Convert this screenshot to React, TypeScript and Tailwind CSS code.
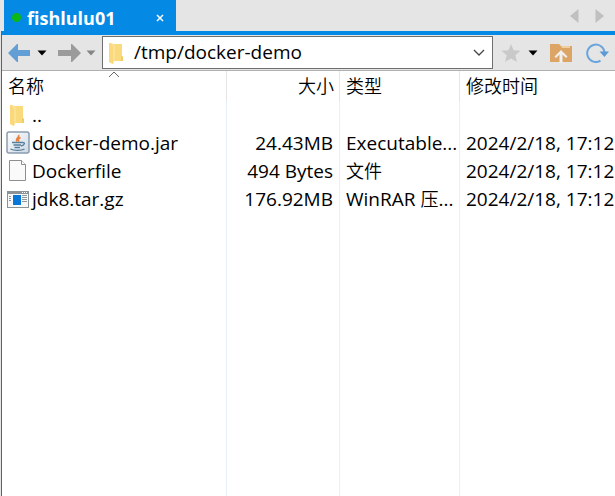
import React, { useState } from "react";

type FileRow = {
  icon: React.ReactNode;
  name: string;
  size: string;
  type: React.ReactNode;
  modified: string;
};

const FolderIcon = () => (
  <svg width="24" height="24" viewBox="0 0 24 24" className="shrink-0">
    <path d="M8 3h9v12l1 1v4H8z" fill="#f9da7c" />
    <path d="M16 15h1l1 1v4h-2z" fill="#f3cd63" />
    <path d="M4 2h3l3 3v14l-2 4-4-2z" fill="#fde294" />
    <path d="M4 2h1l3 4v17l-4-2z" fill="#fbd87c" />
  </svg>
);

const JarIcon = () => (
  <svg width="24" height="24" viewBox="0 0 24 24" className="shrink-0">
    <defs>
      <linearGradient id="jar" x1="0" y1="0" x2="1" y2="1">
        <stop offset="0" stopColor="#ffffff" />
        <stop offset="1" stopColor="#cdd8e3" />
      </linearGradient>
    </defs>
    <rect x="1" y="1" width="22" height="21" rx="2" fill="url(#jar)" stroke="#8b9cae" strokeWidth="1.5" />
    <path d="M12.5 4c1.500 2.500-3.500 3.500-1.500 6.500M14.500 6.500c-3 1.500-2.500 2-1.500 4" fill="none" stroke="#e9803c" strokeWidth="1.7" />
    <path d="M6 11.500h10M7.500 14h7.500M8.500 16.500h5.500M16 11.500c4-.5 2.500 3-1 3.500" fill="none" stroke="#557f9f" strokeWidth="1.4" />
    <path d="M4.500 18c3 1.800 11 1.800 14 0" fill="none" stroke="#557f9f" strokeWidth="1.4" />
  </svg>
);

const DocumentIcon = () => (
  <svg width="24" height="24" viewBox="0 0 24 24" className="shrink-0">
    <path d="M3.500 1.500h12l4 4v16h-16z" fill="#fafafa" stroke="#8e8e8e" />
    <path d="M15.500 1.500v4h4" fill="#fff" stroke="#8e8e8e" />
  </svg>
);

const ArchiveIcon = () => (
  <svg width="24" height="24" viewBox="0 0 24 24" className="shrink-0" shapeRendering="crispEdges">
    <rect x="1" y="4" width="22" height="17" fill="#8b9298" />
    <rect x="2" y="7" width="20" height="13" fill="#f8f8f8" />
    <path d="M16 5.500h1M18 5.500h1M20 5.500h1" stroke="#fff" />
    <rect x="7" y="8" width="8" height="10" fill="#0877d9" />
    <path d="M3 9.500h2M3 11.500h2M3 13.500h2M16 8.500h5M16 10.500h5M16 12.500h5M16 14.500h5" stroke="#8f969c" />
  </svg>
);

const Caret = ({ color }: { color: string }) => (
  <svg width="10" height="6" viewBox="0 0 10 6" className="shrink-0">
    <path d="M0.500 0.500h9L5 5.500z" fill={color} />
  </svg>
);

const rows: FileRow[] = [
  { icon: <FolderIcon />, name: "..", size: "", type: "", modified: "" },
  { icon: <JarIcon />, name: "docker-demo.jar", size: "24.43MB", type: "Executable...", modified: "2024/2/18, 17:12" },
  {
    icon: <DocumentIcon />,
    name: "Dockerfile",
    size: "494 Bytes",
    type: <span className="text-[18px] font-[350]">文件</span>,
    modified: "2024/2/18, 17:12",
  },
  {
    icon: <ArchiveIcon />,
    name: "jdk8.tar.gz",
    size: "176.92MB",
    type: (
      <>
        WinRAR <span className="text-[18px] font-[350]">压</span>...
      </>
    ),
    modified: "2024/2/18, 17:12",
  },
];

const TabBar = () => (
  <div className="flex h-[31px] items-stretch justify-between pl-1">
    <div className="flex w-[172px] items-center bg-[#048ae5] pt-1 pr-2 pl-2 text-white">
      <span className="size-[9px] rounded-full bg-[#0cb814]" />
      <button className="ml-[6px] text-[18px] leading-6 font-bold">fishlulu01</button>
      <button aria-label="关闭" className="ml-auto flex size-4 items-center justify-center">
        <svg width="8" height="8" viewBox="0 0 8 8">
          <path d="M1 1l6 6M7 1L1 7" stroke="#fff" strokeWidth="1.5" />
        </svg>
      </button>
    </div>
    <div className="flex items-center gap-4 pr-[11px]">
      <button aria-label="上一个标签">
        <svg width="9" height="14" viewBox="0 0 9 14">
          <path d="M8.500 0v14L0 7z" fill="#c0c0c0" />
        </svg>
      </button>
      <button aria-label="下一个标签">
        <svg width="9" height="14" viewBox="0 0 9 14">
          <path d="M0.500 0v14L9 7z" fill="#c0c0c0" />
        </svg>
      </button>
    </div>
  </div>
);

const Toolbar = () => {
  const [path, setPath] = useState("/tmp/docker-demo");

  return (
    <div className="flex h-9 items-center border-b border-[#b0b0b0] bg-[#e5e5e5] px-[6px]">
      <button aria-label="后退">
        <svg width="22" height="18" viewBox="0 0 22 18">
          <path d="M0 9l9-9h1v6h12v6H10v6H9z" fill="#639fd4" />
        </svg>
      </button>
      <button aria-label="后退历史" className="ml-[7px]">
        <Caret color="#000" />
      </button>
      <button aria-label="前进" className="ml-[11px]">
        <svg width="23" height="18" viewBox="0 0 23 18">
          <path d="M23 9l-9-9h-1v6H0v6h13v6h1z" fill="#9b9b9b" />
        </svg>
      </button>
      <button aria-label="前进历史" className="ml-[5px]">
        <Caret color="#858585" />
      </button>
      <div className="ml-[6px] flex h-[33px] min-w-0 flex-1 items-center border border-[#6f6f6f] bg-white pr-[7px] pl-[2px]">
        <FolderIcon />
        <input
          aria-label="路径"
          value={path}
          onChange={(e) => setPath(e.target.value)}
          className="ml-[5px] h-[27px] min-w-0 flex-1 bg-transparent text-[19px] text-black outline-none"
        />
        <button aria-label="展开路径">
          <svg width="12" height="8" viewBox="0 0 12 8">
            <path d="M1 1l5 5 5-5" fill="none" stroke="#444" strokeWidth="1.3" />
          </svg>
        </button>
      </div>
      <button aria-label="收藏" className="ml-2">
        <svg width="20" height="20" viewBox="0 0 20 20">
          <path d="M10 1l2.600 6.300 6.900.5-5.200 4.400 1.600 6.800L10 15.400 4.100 19l1.600-6.800L.5 7.800l6.900-.5z" fill="#c9c9c9" />
        </svg>
      </button>
      <button aria-label="收藏夹" className="ml-[7px]">
        <Caret color="#000" />
      </button>
      <button aria-label="上级目录" className="ml-3">
        <svg width="22" height="20" viewBox="0 0 22 20">
          <path d="M0 1h9l2 2h11v16H0z" fill="#dca565" />
          <path d="M11 3h9v2h-8z" fill="#efcf9f" />
          <path d="M11 7l6.500 6.500-1.500 1.500-3.500-3.500V20h-3v-8.500L6 15l-1.500-1.500z" fill="#f0f0f0" />
        </svg>
      </button>
      <button aria-label="刷新" className="ml-[14px]">
        <svg width="23" height="20" viewBox="0 0 23 20">
          <path d="M14.500 17.700A8.700 8.700 0 1 1 18.500 9" fill="none" stroke="#69a5dc" strokeWidth="2" />
          <path d="M13.500 8.500H23L18.500 14z" fill="#5b9ad4" />
        </svg>
      </button>
    </div>
  );
};

const FileTable = () => (
  <div className="min-h-0 flex-1 overflow-hidden bg-white">
    <table className="h-full w-full table-fixed border-separate border-spacing-0 text-[19px] leading-7 whitespace-nowrap text-black">
      <colgroup>
        <col className="w-[225px]" />
        <col className="w-[113px]" />
        <col className="w-[120px]" />
        <col />
      </colgroup>
      <thead className="text-[18px]">
        <tr className="h-[30px]">
          <th className="relative border-r border-[#e5e5e5] p-0 pl-[6px] text-left font-[350]">
            名称
            <svg width="12" height="7" viewBox="0 0 12 7" className="absolute top-0 left-1/2 -translate-x-1/2">
              <path d="M1 6l5-5 5 5" fill="none" stroke="#666" />
            </svg>
          </th>
          <th className="border-r border-[#e5e5e5] p-0 pr-[5px] text-right font-[350]">大小</th>
          <th className="border-r border-[#e5e5e5] p-0 pl-[6px] text-left font-[350]">类型</th>
          <th className="p-0 pl-[6px] text-left font-[350]">修改时间</th>
        </tr>
      </thead>
      <tbody>
        {rows.map((row) => (
          <tr key={row.name} className="h-7">
            <td className="border-r border-[#e8f1fb] p-0 pl-1">
              <div className="flex items-center gap-[2px]">
                {row.icon}
                {row.name}
              </div>
            </td>
            <td className="border-r border-[#e8f1fb] p-0 pr-[6px] text-right">{row.size}</td>
            <td className="border-r border-[#e8f1fb] p-0 pl-[6px]">{row.type}</td>
            <td className="overflow-hidden p-0 pl-[6px]">{row.modified}</td>
          </tr>
        ))}
        {/* empty row, keeps the column lines running to the bottom */}
        <tr aria-hidden="true">
          <td className="border-r border-[#e8f1fb] p-0" />
          <td className="border-r border-[#e8f1fb] p-0" />
          <td className="border-r border-[#e8f1fb] p-0" />
          <td className="p-0" />
        </tr>
      </tbody>
    </table>
  </div>
);

const App = () => {
  return (
    <div className="flex h-screen flex-col overflow-hidden bg-[#e5e5e5] font-['Open_Sans','Noto_Sans_CJK_SC',sans-serif]">
      <TabBar />
      <div className="ml-px flex min-h-0 flex-1 flex-col border-t-4 border-l border-t-[#048ae5] border-l-[#0878c8]">
        <Toolbar />
        <FileTable />
      </div>
    </div>
  );
};

export default App;
